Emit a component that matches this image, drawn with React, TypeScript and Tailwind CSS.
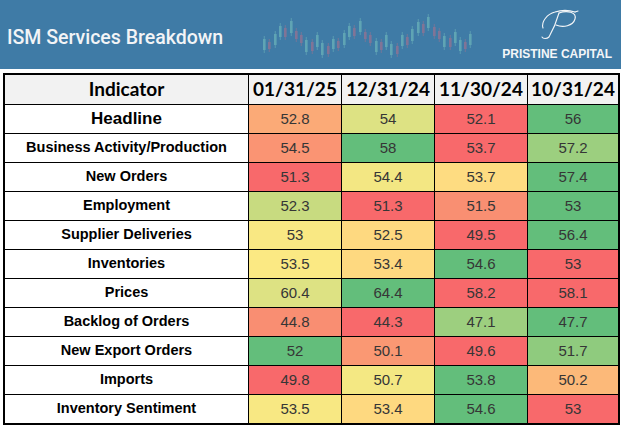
const SANS = "font-['Liberation_Sans',Arial,sans-serif]"

type Cell = [string, string]
type Row = { label: string; cells: Cell[]; big?: boolean }

const dates = ['01/31/25', '12/31/24', '11/30/24', '10/31/24']

const rows: Row[] = [
  { label: 'Headline', big: true, cells: [['52.8', 'bg-[#fbaa77]'], ['54', 'bg-[#dde283]'], ['52.1', 'bg-[#f8696b]'], ['56', 'bg-[#63be7b]']] },
  { label: 'Business Activity/Production', cells: [['54.5', 'bg-[#fa9473]'], ['58', 'bg-[#63be7b]'], ['53.7', 'bg-[#f8696b]'], ['57.2', 'bg-[#9ccf7f]']] },
  { label: 'New Orders', cells: [['51.3', 'bg-[#f8696b]'], ['54.4', 'bg-[#f3e783]'], ['53.7', 'bg-[#fedc81]'], ['57.4', 'bg-[#63be7b]']] },
  { label: 'Employment', cells: [['52.3', 'bg-[#c8db80]'], ['51.3', 'bg-[#f8696b]'], ['51.5', 'bg-[#f98f72]'], ['53', 'bg-[#63be7b]']] },
  { label: 'Supplier Deliveries', cells: [['53', 'bg-[#f9e883]'], ['52.5', 'bg-[#fed980]'], ['49.5', 'bg-[#f8696b]'], ['56.4', 'bg-[#63be7b]']] },
  { label: 'Inventories', cells: [['53.5', 'bg-[#fbe983]'], ['53.4', 'bg-[#fed980]'], ['54.6', 'bg-[#63be7b]'], ['53', 'bg-[#f8696b]']] },
  { label: 'Prices', cells: [['60.4', 'bg-[#dde283]'], ['64.4', 'bg-[#63be7b]'], ['58.2', 'bg-[#f8696b]'], ['58.1', 'bg-[#f8696b]']] },
  { label: 'Backlog of Orders', cells: [['44.8', 'bg-[#f98e72]'], ['44.3', 'bg-[#f8696b]'], ['47.1', 'bg-[#9dcf7f]'], ['47.7', 'bg-[#63be7b]']] },
  { label: 'New Export Orders', cells: [['52', 'bg-[#63be7b]'], ['50.1', 'bg-[#fa9873]'], ['49.6', 'bg-[#f8696b]'], ['51.7', 'bg-[#8fcb7e]']] },
  { label: 'Imports', cells: [['49.8', 'bg-[#f8696b]'], ['50.7', 'bg-[#f4e883]'], ['53.8', 'bg-[#63be7b]'], ['50.2', 'bg-[#fcb979]']] },
  { label: 'Inventory Sentiment', cells: [['53.5', 'bg-[#f8e883]'], ['53.4', 'bg-[#fed980]'], ['54.6', 'bg-[#63be7b]'], ['53', 'bg-[#f8696b]']] },
]

const colW = ['w-[93px]', 'w-[93px]', 'w-[93px]', 'flex-1']

// [x, bodyTop, bodyBottom, up]
const candles: [number, number, number, boolean][] = [
  [1, 39, 50, true], [6, 42, 49, false], [12, 34, 45, true], [17, 26, 37, true],
  [22, 28, 37, false], [28, 21, 33, true], [33, 31, 39, false], [38, 35, 43, false],
  [43, 40, 52, true], [49, 42, 51, false], [54, 35, 47, true], [59, 43, 55, true],
  [65, 46, 54, false], [70, 39, 49, true], [75, 41, 48, false], [81, 33, 45, true],
  [86, 26, 37, true], [91, 28, 36, false], [97, 21, 32, true], [102, 32, 39, false],
  [107, 35, 43, false], [113, 41, 52, true], [118, 42, 50, false], [123, 35, 47, true],
  [128, 44, 55, true], [134, 46, 54, false], [139, 35, 46, true], [144, 37, 45, false],
  [149, 29, 41, true], [155, 22, 33, true], [160, 24, 33, false], [165, 17, 28, true],
  [171, 27, 36, false], [176, 31, 39, false], [181, 36, 47, true], [187, 38, 47, false],
  [192, 32, 43, true], [197, 40, 51, true], [202, 42, 49, false], [207, 34, 45, true],
]

function CandleChart() {
  return (
    <svg width="212" height="69" viewBox="0 0 212 69" className="shrink-0">
      {candles.map(([x, t, b, up], i) => {
        const c = up ? '#80cdc2' : '#b8708a'
        return (
          <g key={i} opacity={up ? 0.5 : 0.55}>
            <line x1={x + 1.25} x2={x + 1.25} y1={t - 3} y2={b + 3} stroke={c} strokeWidth="0.8" />
            <rect x={x} y={t} width="2.6" height={b - t} fill={c} />
          </g>
        )
      })}
    </svg>
  )
}

function Logo() {
  return (
    <div className="flex flex-col items-center self-start pt-[8px] mr-[9px] ml-auto">
      <svg width="46" height="32" viewBox="0 0 44 32" fill="none" stroke="#f4f6f8" strokeWidth="1.1" strokeLinecap="round">
        <path d="M24 5 C22 12 18 22 14 29 C12 31 8 31 7 29" />
        <path d="M8 20 C6 14 12 6 20 4 C26 2 34 2 40 4" />
        <path d="M24 5 C32 2 42 4 40 11 C38 18 28 20 21 17" />
        <path d="M40 4 L43 3" />
      </svg>
      <div className={`${SANS} mt-[8px] text-[12px] font-bold leading-none whitespace-nowrap text-[#f4f6f8]`}>PRISTINE CAPITAL</div>
    </div>
  )
}

export default function App() {
  return (
    <div className="w-[621px] h-[427px] bg-white overflow-hidden">
      <div className="flex h-[69px] items-center bg-[#3f7ba6] pl-[7px]">
        <div className="mt-[7px] w-[217px] shrink-0 whitespace-nowrap font-['Roboto',sans-serif] text-[19.5px] font-medium leading-none text-[#f2f4f6]">
          ISM Services Breakdown
        </div>
        <div className="ml-[38px]">
          <CandleChart />
        </div>
        <Logo />
      </div>

      <div className="ml-[3px] mt-[4px] w-[617px] border-2 border-black">
        <div className="flex h-[30px] border-b border-black bg-[#f2f2f2]">
          <div className="flex w-[243px] items-center justify-center font-['Lato',sans-serif] text-[19px] font-bold text-black">
            Indicator
          </div>
          {dates.map((d, i) => (
            <div
              key={d}
              className={`${colW[i]} flex items-center justify-center border-l border-black font-['Lato',sans-serif] text-[19px] font-bold text-black`}
            >
              {d}
            </div>
          ))}
        </div>

        {rows.map((r, ri) => (
          <div
            key={r.label}
            className={`flex ${ri === rows.length - 1 ? 'h-[28px]' : 'h-[29px] border-b border-black'}`}
          >
            <div
              className={`${SANS} flex w-[243px] items-center justify-center bg-white font-bold whitespace-nowrap text-black ${r.big ? 'text-[17px]' : 'text-[14.5px]'}`}
            >
              {r.label}
            </div>
            {r.cells.map(([v, bg], i) => (
              <div
                key={i}
                className={`${colW[i]} ${bg} ${SANS} flex items-center justify-center border-l border-black text-[15px] text-[#363636]`}
              >
                {v}
              </div>
            ))}
          </div>
        ))}
      </div>
    </div>
  )
}
